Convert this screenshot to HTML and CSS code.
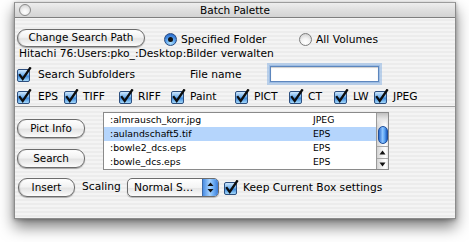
FILE: index.html
```html
<!DOCTYPE html>
<html>
<head>
<meta charset="utf-8">
<title>Batch Palette</title>
<link rel="stylesheet" href="styles.css">
</head>
<body>
<svg class="defs" width="0" height="0" aria-hidden="true">
  <defs>
    <linearGradient id="cbg" x1="0" y1="0" x2="0" y2="1">
      <stop offset="0" stop-color="#d6ebfd"/>
      <stop offset="0.45" stop-color="#74b3ef"/>
      <stop offset="0.55" stop-color="#3e8ade"/>
      <stop offset="1" stop-color="#aee0fc"/>
    </linearGradient>
    <symbol id="cb" viewBox="0 0 15 15">
      <rect x="0.5" y="2.5" width="12" height="12" rx="1.5" fill="url(#cbg)" stroke="#2d4f7f"/>
      <path d="M2.9 8.1 L5.7 11.9 L13 1.2" fill="none" stroke="#0d0d0d" stroke-width="2.3" stroke-linecap="square"/>
    </symbol>
  </defs>
</svg>
<div class="window">
  <div class="titlebar">
    <div class="tb-left"><span class="close"></span></div>
    <div class="title">Batch Palette</div>
    <div class="tb-right"></div>
  </div>
  <div class="content">
    <div class="row row-top">
      <div class="btn btn-path">Change Search Path</div>
      <div class="radio radio-folder"><span class="radio-dot on"></span>Specified Folder</div>
      <div class="radio"><span class="radio-dot"></span>All Volumes</div>
    </div>
    <div class="path">Hitachi 76:Users:pko_:Desktop:Bilder verwalten</div>
    <div class="row row-search">
      <div class="check check-sub"><svg class="cb"><use href="#cb"/></svg>Search Subfolders</div>
      <div class="fname">File name</div>
      <div class="field-wrap"><div class="field"></div></div>
    </div>
    <div class="formats">
      <div class="check"><svg class="cb"><use href="#cb"/></svg>EPS</div>
      <div class="check"><svg class="cb"><use href="#cb"/></svg>TIFF</div>
      <div class="check"><svg class="cb"><use href="#cb"/></svg>RIFF</div>
      <div class="check"><svg class="cb"><use href="#cb"/></svg>Paint</div>
      <div class="check"><svg class="cb"><use href="#cb"/></svg>PICT</div>
      <div class="check"><svg class="cb"><use href="#cb"/></svg>CT</div>
      <div class="check"><svg class="cb"><use href="#cb"/></svg>LW</div>
      <div class="check"><svg class="cb"><use href="#cb"/></svg>JPEG</div>
    </div>
    <div class="divider"></div>
    <div class="mid">
      <div class="side">
        <div class="btn btn-side">Pict Info</div>
        <div class="btn btn-side">Search</div>
      </div>
      <div class="listbox">
        <div class="list">
          <div class="item"><span class="name">:almrausch_korr.jpg</span><span class="type">JPEG</span></div>
          <div class="item sel"><span class="name">:aulandschaft5.tif</span><span class="type">EPS</span></div>
          <div class="item"><span class="name">:bowle2_dcs.eps</span><span class="type">EPS</span></div>
          <div class="item"><span class="name">:bowle_dcs.eps</span><span class="type">EPS</span></div>
        </div>
        <div class="scrollbar">
          <div class="track"><div class="thumb"></div></div>
          <div class="arrow arrow-up"><svg width="7" height="5" viewBox="0 0 7 5"><path d="M3.5 0.5 L6.5 4.5 L0.5 4.5 Z" fill="#111"/></svg></div>
          <div class="arrow arrow-down"><svg width="7" height="5" viewBox="0 0 7 5"><path d="M0.5 0.5 L6.5 0.5 L3.5 4.5 Z" fill="#111"/></svg></div>
        </div>
      </div>
    </div>
    <div class="row row-bottom">
      <div class="btn btn-insert">Insert</div>
      <div class="scaling">Scaling</div>
      <div class="popup">
        <span class="popup-text">Normal S...</span>
        <span class="popup-arrows"><svg width="7" height="11" viewBox="0 0 7 11"><path d="M3.5 0.5 L6.5 4 L0.5 4 Z M0.5 7 L6.5 7 L3.5 10.5 Z" fill="#111"/></svg></span>
      </div>
      <div class="check check-keep"><svg class="cb"><use href="#cb"/></svg>Keep Current Box settings</div>
    </div>
  </div>
</div>
</body>
</html>
```

FILE: styles.css
```css
* { box-sizing: border-box; }
html, body { margin: 0; padding: 0; }
body {
  background: #fff;
  width: 469px;
  height: 242px;
  overflow: hidden;
  font-family: "DejaVu Sans", "Liberation Sans", sans-serif;
  font-size: 10.7px;
  color: #000;
}
.defs { display: block; width: 0; height: 0; overflow: hidden; }

.window {
  margin: 2px 0 0 14px;
  width: 442px;
  height: 217px;
  border: 1px solid #8c8c8c;
  border-top-color: #9c9c9c;
  box-shadow: 0 8px 14px rgba(0,0,0,0.5), 0 1px 4px rgba(0,0,0,0.3);
  display: flex;
  flex-direction: column;
  background: repeating-linear-gradient(to bottom, #ececec 0, #ececec 2px, #f4f4f4 2px, #f4f4f4 4px);
}

.titlebar {
  height: 15px;
  flex: none;
  display: grid;
  grid-template-columns: 1fr auto 1fr;
  align-items: center;
  background: linear-gradient(to bottom, #eeeeee, #dcdcdc 60%, #d3d3d3);
  border-bottom: 1px solid #7e7e7e;
}
.tb-left { display: flex; align-items: center; padding-left: 4px; }
.close {
  width: 12px;
  height: 12px;
  border-radius: 50%;
  border: 1px solid #8a8a8a;
  background: radial-gradient(circle at 50% 70%, #ffffff 0, #f0f0f0 40%, #c9c9c9 100%);
}
.title { font-size: 10.5px; line-height: 14px; }

.content { display: flex; flex-direction: column; }
.row { display: flex; align-items: center; flex: none; }

.btn {
  display: flex;
  align-items: center;
  justify-content: center;
  height: 18px;
  padding-bottom: 2px;
  font-size: 10.4px;
  border: 1px solid #6c6c6c;
  border-radius: 9px;
  background: linear-gradient(to bottom, #ffffff 0, #f2f2f2 45%, #e4e4e4 55%, #f3f3f3 85%, #ffffff 100%);
  box-shadow: 0 1px 1px rgba(0,0,0,0.3), inset 1px 0 1px rgba(0,0,0,0.15);
  white-space: nowrap;
  flex: none;
}

.row-top { margin-top: 11px; height: 18px; align-items: flex-start; }
.btn-path { margin-left: 2px; width: 128px; }
.radio { display: flex; align-items: center; margin-top: 4px; white-space: nowrap; }
.radio-folder { margin-left: 19px; width: 135px; }
.radio-dot {
  width: 13px;
  height: 13px;
  border-radius: 50%;
  border: 1px solid #7c7c7c;
  background: radial-gradient(circle at 50% 75%, #ffffff 0, #f4f4f4 40%, #c6c6c6 100%);
  margin-right: 4px;
  display: flex;
  align-items: center;
  justify-content: center;
  flex: none;
}
.radio-dot.on {
  border-color: #2b4c80;
  background: radial-gradient(circle at 50% 80%, #b4e4ff 0, #5ba2ec 45%, #2c6fcf 80%, #3b7cd8 100%);
}
.radio-dot.on::after {
  content: "";
  width: 5px;
  height: 5px;
  border-radius: 50%;
  background: #111;
}

.path { height: 13px; line-height: 13px; padding-left: 4px; white-space: nowrap; flex: none; }

.row-search { margin-top: 3px; height: 22px; }
.check { display: flex; align-items: center; white-space: nowrap; }
.cb { width: 15px; height: 15px; margin-right: 4px; flex: none; }
.check-sub { margin-left: 2px; width: 173px; }
.check-sub .cb { margin-right: 6px; }
.fname { width: 77px; }
.field-wrap { width: 115px; height: 22px; padding: 3px; }
.field {
  width: 100%;
  height: 100%;
  background: #fff;
  border: 1px solid #5d86bd;
  box-shadow: 0 0 0 1px #9dbde4, 0 0 0 3px rgba(140,180,228,0.55), inset 0 1px 1px rgba(0,0,0,0.2);
}

.formats {
  margin: 4px 0 0 2px;
  height: 14px;
  display: grid;
  grid-template-columns: 47px 55px 52px 64px 54px 45px 40px auto;
  align-items: center;
  flex: none;
}
.formats .check:first-child .cb { margin-right: 6px; }

.divider { margin-top: 3px; height: 1px; background: #a3a3a3; flex: none; }

.mid { margin-top: 5px; height: 58px; display: flex; flex: none; }
.side { margin-left: 2px; width: 68px; display: flex; flex-direction: column; gap: 11px; padding-top: 7px; }
.btn-side { width: 68px; height: 19px; }

.listbox {
  margin-left: 18px;
  width: 286px;
  height: 58px;
  border: 1px solid #8a8a8a;
  background: #fff;
  display: flex;
}
.list { flex: 1; font-size: 9.3px; }
.item { height: 14px; line-height: 14px; display: flex; white-space: nowrap; }
.item.sel { background: #b5d5fc; }
.name { width: 209px; padding-left: 6px; }

.scrollbar {
  width: 12px;
  border-left: 1px solid #9a9a9a;
  display: flex;
  flex-direction: column;
  background: linear-gradient(to right, #d2d2d2, #f2f2f2 45%, #ffffff 80%, #e4e4e4);
}
.track { flex: 1; padding-top: 13px; display: flex; justify-content: center; background: linear-gradient(to bottom, #c0c0c0 0, #e6e6e6 6px, transparent 12px); }
.thumb {
  width: 10px;
  height: 18px;
  border-radius: 5px;
  border: 1px solid #1f4f9c;
  background: linear-gradient(to right, #2e6fd0, #8fc6ff 45%, #5aa3f2 70%, #1e5cc0);
}
.arrow { height: 12px; display: flex; align-items: center; justify-content: center; border-top: 1px solid #a8a8a8; }
.arrow-down { height: 11px; }

.row-bottom { margin-top: 8px; height: 19px; }
.btn-insert { margin-left: 3px; width: 57px; height: 19px; }
.scaling { margin-left: 7px; width: 45px; padding-bottom: 3px; }
.popup {
  width: 92px;
  height: 19px;
  display: flex;
  border: 1px solid #6c6c6c;
  border-radius: 5px;
  overflow: hidden;
  background: linear-gradient(to bottom, #ffffff, #f4f4f4 50%, #e6e6e6 55%, #fbfbfb);
  box-shadow: 0 1px 1px rgba(0,0,0,0.25);
}
.popup-text { flex: 1; padding-left: 6px; line-height: 17px; white-space: nowrap; }
.popup-arrows {
  width: 16px;
  display: flex;
  align-items: center;
  justify-content: center;
  border-left: 1px solid #3d6aa8;
  background: linear-gradient(to right, #4a8de3, #a7d3ff 45%, #6eaef3 70%, #3a7ad6);
}
.check-keep { margin-left: 5px; }
.check-keep .cb { margin-right: 4px; }
```
